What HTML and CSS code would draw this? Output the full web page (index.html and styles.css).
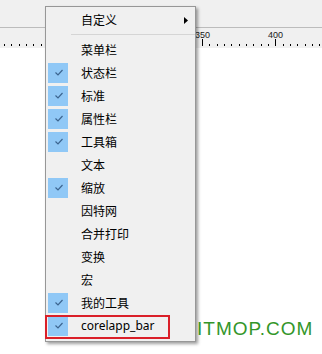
FILE: index.html
```html
<!DOCTYPE html>
<html>
<head>
<meta charset="utf-8">
<link rel="stylesheet" href="styles.css">
</head>
<body>
<div class="top"></div>
<div class="ruler">
  <svg class="ruler-svg" width="322" height="20" viewBox="0 0 322 20">
    <path class="minor" d="M4.5 16v2M11.5 16v2M19.5 16v2M26.5 16v2M33.5 16v2M41.5 16v2M48.5 16v2M63.5 16v2M70.5 16v2M77.5 16v2M85.5 16v2M92.5 16v2M99.5 16v2M107.5 16v2M114.5 16v2M121.5 16v2M136.5 16v2M143.5 16v2M151.5 16v2M158.5 16v2M165.5 16v2M173.5 16v2M180.5 16v2M187.5 16v2M195.5 16v2M209.5 16v2M217.5 16v2M224.5 16v2M231.5 16v2M239.5 16v2M246.5 16v2M253.5 16v2M261.5 16v2M268.5 16v2M283.5 16v2M290.5 16v2M297.5 16v2M305.5 16v2M312.5 16v2M319.5 16v2"/>
    <path class="major" d="M55.5 11v7M129.5 11v7M202.5 11v7M275.5 11v7"/>
    <text class="lbl" x="202.5" y="10">350</text>
    <text class="lbl" x="275.5" y="10">400</text>
  </svg>
</div>
<div class="canvas"></div>

<div class="menu">
  <div class="item sub">
    <span class="check"></span><span class="label">自定义</span>
    <svg class="arrow" width="4" height="7" viewBox="0 0 4 7"><path d="M0 0L4 3.5L0 7Z"/></svg>
  </div>
  <div class="sep"></div>
  <div class="items">
    <div class="item"><span class="check"></span><span class="label">菜单栏</span></div>
    <div class="item"><span class="check on"><svg viewBox="0 0 20 20"><polyline points="7.5,9.5 10,12 14.5,7"/></svg></span><span class="label">状态栏</span></div>
    <div class="item"><span class="check on"><svg viewBox="0 0 20 20"><polyline points="7.5,9.5 10,12 14.5,7"/></svg></span><span class="label">标准</span></div>
    <div class="item"><span class="check on"><svg viewBox="0 0 20 20"><polyline points="7.5,9.5 10,12 14.5,7"/></svg></span><span class="label">属性栏</span></div>
    <div class="item"><span class="check on"><svg viewBox="0 0 20 20"><polyline points="7.5,9.5 10,12 14.5,7"/></svg></span><span class="label">工具箱</span></div>
    <div class="item"><span class="check"></span><span class="label">文本</span></div>
    <div class="item"><span class="check on"><svg viewBox="0 0 20 20"><polyline points="7.5,9.5 10,12 14.5,7"/></svg></span><span class="label">缩放</span></div>
    <div class="item"><span class="check"></span><span class="label">因特网</span></div>
    <div class="item"><span class="check"></span><span class="label">合并打印</span></div>
    <div class="item"><span class="check"></span><span class="label">变换</span></div>
    <div class="item"><span class="check"></span><span class="label">宏</span></div>
    <div class="item"><span class="check on"><svg viewBox="0 0 20 20"><polyline points="7.5,9.5 10,12 14.5,7"/></svg></span><span class="label">我的工具</span></div>
    <div class="item"><span class="check on"><svg viewBox="0 0 20 20"><polyline points="7.5,9.5 10,12 14.5,7"/></svg></span><span class="label latin">corelapp_bar</span></div>
  </div>
</div>

<div class="highlight"></div>
<div class="watermark">ITMOP.COM</div>
</body>
</html>
```

FILE: styles.css
```css
html, body {
  margin: 0;
  padding: 0;
}
body {
  width: 322px;
  height: 354px;
  overflow: hidden;
  background: #ffffff;
  position: relative;
  font-family: "Noto Sans CJK SC", "Noto Sans", sans-serif;
}
.top {
  height: 27px;
  background: #f0f0f0;
  border-bottom: 1px solid #bcbcbc;
}
.ruler {
  height: 20px;
  background: #f0f0f0;
}
.ruler-svg {
  display: block;
}
.ruler-svg .minor,
.ruler-svg .major {
  stroke: #000;
  stroke-width: 1;
  fill: none;
}
.ruler-svg .lbl {
  font-family: "Liberation Sans", Arial, sans-serif;
  font-size: 9px;
  fill: #1a1a1a;
  text-anchor: middle;
}
.canvas {
  height: 306px;
  background: #ffffff;
}

.menu {
  position: absolute;
  left: 45px;
  top: 6px;
  width: 151px;
  box-sizing: border-box;
  background: #f0f0f0;
  border: 1px solid #979797;
  padding: 2px 0 4px 0;
  box-shadow: 2px 2px 3px rgba(0, 0, 0, 0.38);
  z-index: 2;
}
.items {
  display: flex;
  flex-direction: column;
  gap: 1px;
}
.item {
  display: flex;
  align-items: center;
  height: 22px;
  font-size: 12px;
  color: #000;
}
.check {
  width: 20px;
  height: 20px;
  margin-left: 2px;
  flex: none;
  display: flex;
}
.check.on {
  background: #90c8f6;
}
.check svg {
  width: 20px;
  height: 20px;
}
.check polyline {
  fill: none;
  stroke: #3c6590;
  stroke-width: 1.2;
}
.label {
  margin-left: 13px;
  line-height: 22px;
  white-space: nowrap;
}
.label.latin {
  font-family: "Noto Sans", "Noto Sans CJK SC", sans-serif;
}
.arrow {
  margin-left: auto;
  margin-right: 7px;
  fill: #000;
}
.sep {
  height: 1px;
  background: #d5d5d5;
  margin: 3px 0 4px 25px;
}

.highlight {
  position: absolute;
  left: 45px;
  top: 315px;
  width: 125px;
  height: 24px;
  box-sizing: border-box;
  border: 2px solid #da1f28;
  z-index: 3;
}
.watermark {
  position: absolute;
  left: 197px;
  top: 319px;
  font-family: "Liberation Sans", Arial, sans-serif;
  font-size: 19px;
  line-height: 19px;
  letter-spacing: 1px;
  color: #33962a;
  z-index: 4;
}
```
